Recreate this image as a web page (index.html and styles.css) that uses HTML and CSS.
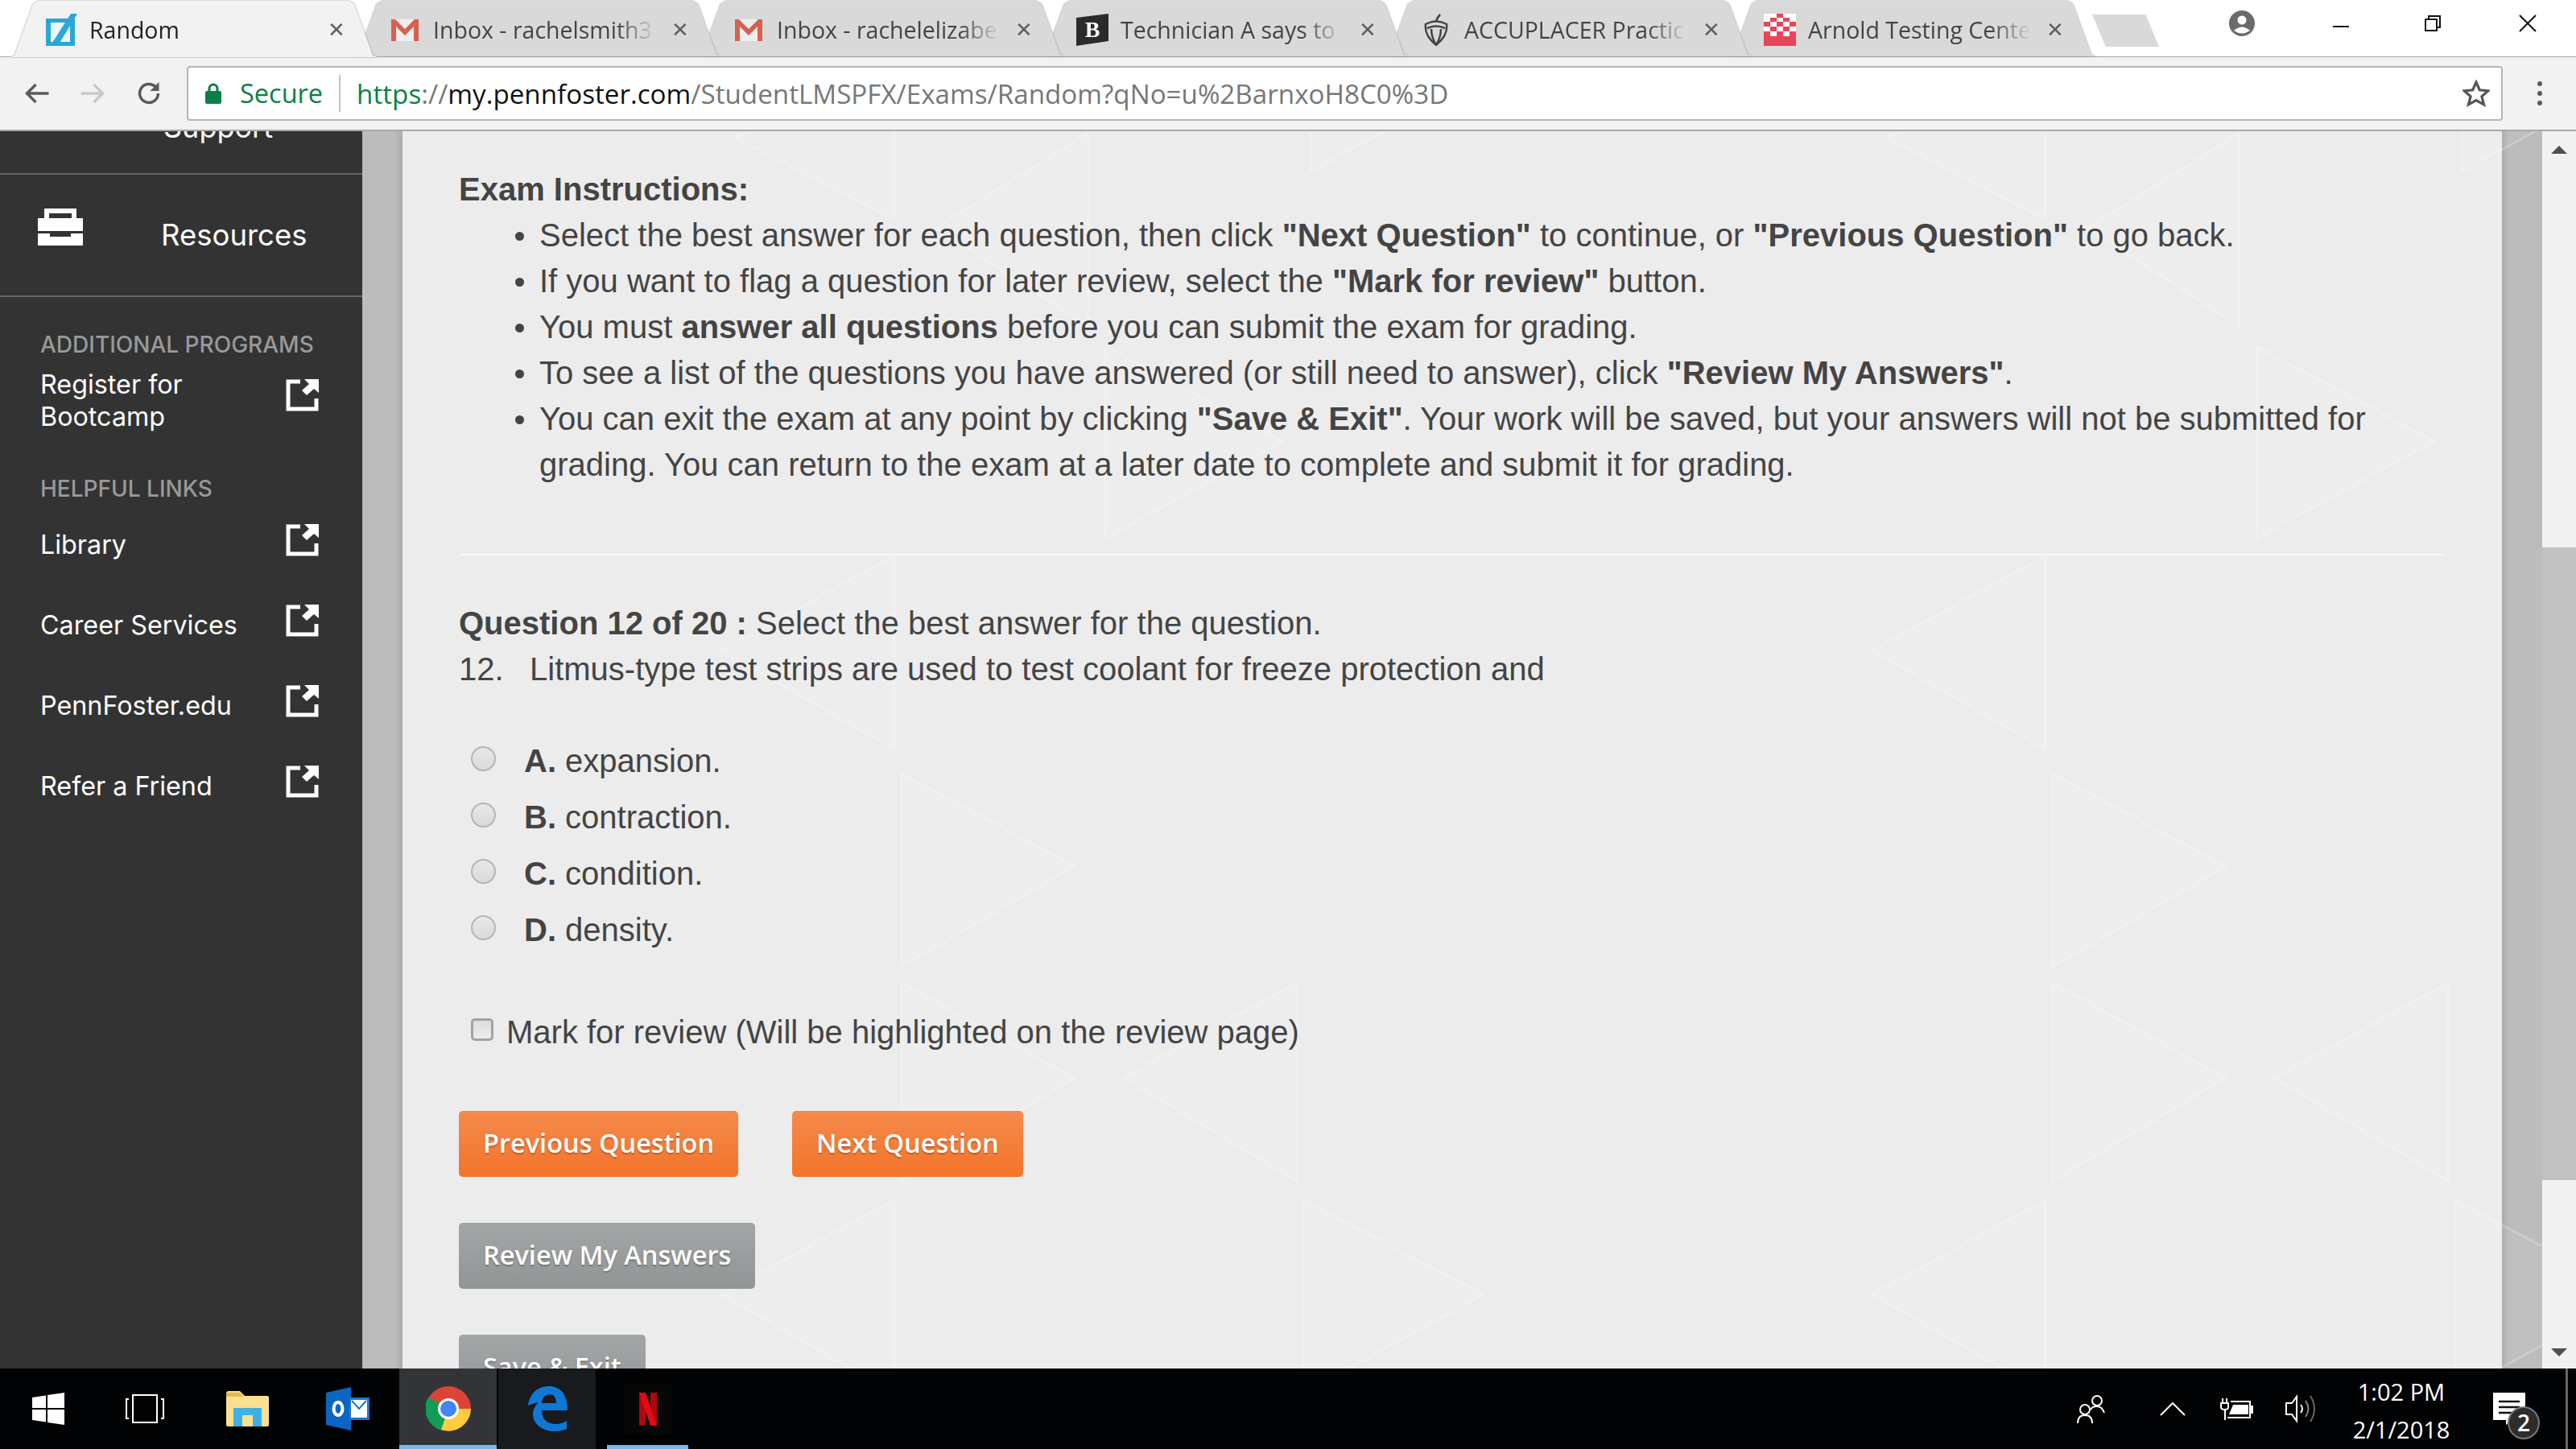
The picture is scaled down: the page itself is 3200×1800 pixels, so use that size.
FILE: index.html
```html
<!DOCTYPE html>
<html lang="en">

<head>
    <meta charset="UTF-8">
    <title>Random</title>
    <link rel="stylesheet" href="styles.css">
</head>

<body>
    <div class="tabstrip">
        <div class="tab active">
            <svg class="favicon" viewBox="0 0 40 40"><rect x="1" y="6" width="36" height="34" fill="#2aa7d8"/><rect x="7" y="11" width="24" height="24" fill="#eaf6fb"/><path d="M9 36L32 0h8L17 38z" fill="#2aa7d8"/></svg>
            <span class="tab-title">Random</span><span class="tab-x">&#10005;</span>
        </div>
        <div class="tab">
            <svg class="favicon" viewBox="0 0 40 40"><rect x="3" y="7" width="34" height="27" fill="#eee"/><path d="M3 7h5l12 12L32 7h5v27h-6V16L20 27 9 16v18H3z" fill="#d9604f"/></svg>
            <span class="tab-title">Inbox - rachelsmith3</span><span class="tab-x">&#10005;</span>
        </div>
        <div class="tab">
            <svg class="favicon" viewBox="0 0 40 40"><rect x="3" y="7" width="34" height="27" fill="#eee"/><path d="M3 7h5l12 12L32 7h5v27h-6V16L20 27 9 16v18H3z" fill="#d9604f"/></svg>
            <span class="tab-title">Inbox - rachelelizabe</span><span class="tab-x">&#10005;</span>
        </div>
        <div class="tab">
            <svg class="favicon" viewBox="0 0 40 40"><path d="M0 5l40-5v34L0 40z" fill="#2b2b2b"/><text x="20" y="29" text-anchor="middle" class="b-letter">B</text></svg>
            <span class="tab-title">Technician A says to c</span><span class="tab-x">&#10005;</span>
        </div>
        <div class="tab">
            <svg class="favicon" viewBox="0 0 40 40"><path d="M7 13q13-7 26 0q2 14-13 26Q5 27 7 13zM20 9q2-5 5-8M9 18q11-5 22 0M14 19q0 10 6 20q6-10 6-20" fill="none" stroke="#444" stroke-width="2.500"/></svg>
            <span class="tab-title">ACCUPLACER Practic</span><span class="tab-x">&#10005;</span>
        </div>
        <div class="tab">
            <svg class="favicon" viewBox="0 0 40 40"><rect width="40" height="40" fill="#e8455a"/><path d="M0 0h16v5H0zM24 0h16v5H24zM0 5h8v5H0zM16 5h8v5h-8zM32 5h8v5h-8zM8 10h8v6H8zM24 10h8v6h-8zM16 16h8v6h-8zM0 16h8v6H0zM32 16h8v6h-8zM8 22h8v6H8zM24 22h8v6h-8z" fill="#fff"/></svg>
            <span class="tab-title">Arnold Testing Cente</span><span class="tab-x">&#10005;</span>
        </div>
        <div class="new-tab"></div>
        <div class="window-controls">
            <svg class="profile" viewBox="0 0 32 32"><circle cx="16" cy="16" r="16" fill="#6b6b6b"/><circle cx="16" cy="12" r="5.500" fill="#fff"/><path d="M6 25q10-9 20 0q-10 7-20 0z" fill="#fff"/></svg>
            <svg class="win-icon" viewBox="0 0 22 22"><path d="M1 15h20" stroke="#111" stroke-width="2"/></svg>
            <svg class="win-icon" viewBox="0 0 22 22"><path d="M2 6h14v14H2zM6 6V2h14v14h-4" fill="none" stroke="#111" stroke-width="2"/></svg>
            <svg class="win-icon" viewBox="0 0 22 22"><path d="M1 1l20 20M21 1L1 21" stroke="#111" stroke-width="2"/></svg>
        </div>
    </div>

    <div class="toolbar">
        <svg class="nav-icon" viewBox="0 0 32 32"><path d="M31 16H4M15 5L4 16l11 11" fill="none" stroke="#5a5a5a" stroke-width="3.500"/></svg>
        <svg class="nav-icon" viewBox="0 0 32 32"><path d="M1 16h27M17 5l11 11-11 11" fill="none" stroke="#c8c8c8" stroke-width="3.500"/></svg>
        <svg class="nav-icon" viewBox="0 0 32 32"><path d="M27 16a11.500 11.500 0 1 1-3.500-8.300" fill="none" stroke="#5a5a5a" stroke-width="3.500"/><path d="M28 2v11H17z" fill="#5a5a5a"/></svg>
        <div class="omnibox">
            <svg class="lock" viewBox="0 0 20 28"><path d="M5 12V8a5 5 0 0 1 10 0v4" fill="none" stroke="#0b8043" stroke-width="3"/><rect y="11" width="20" height="16" rx="2" fill="#0b8043"/></svg>
            <span class="secure">Secure</span>
            <span class="url"><span class="scheme">https</span><span class="grey">://</span><span class="host">my.pennfoster.com</span><span class="grey">/StudentLMSPFX/Exams/Random?qNo=u%2BarnxoH8C0%3D</span></span>
            <svg class="star" viewBox="0 0 32 32"><path d="M16 3l4 9 10 1-7.500 6.500L25 29l-9-5-9 5 2.500-9.500L2 13l10-1z" fill="none" stroke="#555" stroke-width="3"/></svg>
        </div>
        <div class="menu-dots"><i></i><i></i><i></i></div>
    </div>

    <div class="main">
        <div class="sidebar">
            <div class="nav-support"><span>Support</span></div>
            <div class="nav-resources">
                <svg class="briefcase" viewBox="0 0 56 46"><path d="M8 0h40v12h8v16H0V12h8zM14 6v6h28V6z" fill="#fff" fill-rule="evenodd"/><path d="M0 31h15v4h26v-4h15v15H0z" fill="#fff"/></svg>
                <span>Resources</span>
            </div>
            <div class="links">
                <h4>ADDITIONAL PROGRAMS</h4>
                <a class="link link-first">Register for<br>Bootcamp<svg class="ext" viewBox="0 0 41 40"><use href="#ext-icon"/></svg></a>
                <h4>HELPFUL LINKS</h4>
                <a class="link">Library<svg class="ext" viewBox="0 0 41 40"><use href="#ext-icon"/></svg></a>
                <a class="link">Career Services<svg class="ext" viewBox="0 0 41 40"><use href="#ext-icon"/></svg></a>
                <a class="link">PennFoster.edu<svg class="ext" viewBox="0 0 41 40"><use href="#ext-icon"/></svg></a>
                <a class="link">Refer a Friend<svg class="ext" viewBox="0 0 41 40"><use href="#ext-icon"/></svg></a>
            </div>
        </div>
        <div class="gutter"></div>
        <div class="content">
            <h3 class="instr-head">Exam Instructions:</h3>
            <ul class="instructions">
                <li>Select the best answer for each question, then click <b>"Next Question"</b> to continue, or <b>"Previous Question"</b> to go back.</li>
                <li>If you want to flag a question for later review, select the <b>"Mark for review"</b> button.</li>
                <li>You must <b>answer all questions</b> before you can submit the exam for grading.</li>
                <li>To see a list of the questions you have answered (or still need to answer), click <b>"Review My Answers"</b>.</li>
                <li>You can exit the exam at any point by clicking <b>"Save &amp; Exit"</b>. Your work will be saved, but your answers will not be submitted for grading. You can return to the exam at a later date to complete and submit it for grading.</li>
            </ul>
            <hr class="divider">
            <p class="q-line"><b>Question 12 of 20 :</b> Select the best answer for the question.</p>
            <p class="q-line q-text"><span class="q-num">12.</span>Litmus-type test strips are used to test coolant for freeze protection and</p>
            <div class="options">
                <label class="option"><span class="radio"></span><span><b>A.</b> expansion.</span></label>
                <label class="option"><span class="radio"></span><span><b>B.</b> contraction.</span></label>
                <label class="option"><span class="radio"></span><span><b>C.</b> condition.</span></label>
                <label class="option"><span class="radio"></span><span><b>D.</b> density.</span></label>
            </div>
            <label class="mark"><span class="check"></span>Mark for review (Will be highlighted on the review page)</label>
            <div class="btn-row">
                <a class="btn orange">Previous Question</a>
                <a class="btn orange">Next Question</a>
            </div>
            <div class="btn-row"><a class="btn grey-btn">Review My Answers</a></div>
            <div class="btn-row"><a class="btn grey-btn">Save &amp; Exit</a></div>
        </div>
        <div class="gutter"></div>
        <div class="scrollbar">
            <i class="arrow-up"></i>
            <div class="thumb"></div>
            <i class="arrow-down"></i>
        </div>
        <!-- background triangles, one group repeats sideways -->
        <svg class="pattern" viewBox="0 0 2660 1540">
            <g id="tri-tile">
                <polygon points="611,527 396,645 611,768"/>
                <polygon points="620,798 835,913 620,1038"/>
                <polygon points="620,1058 835,1176 620,1304"/>
                <polygon points="1111,1058 895,1176 1111,1304"/>
                <polygon points="873,267 1094,385 873,506"/>
                <polygon points="852,2 663,120 852,243"/>
                <polygon points="611,1327 396,1445 611,1568"/>
                <polygon points="1119,1328 1343,1445 1119,1568"/>
                <polygon points="413,7 611,110 611,-60"/>
                <polygon points="1128,50 1275,-30 1128,-90"/>
            </g>
            <use href="#tri-tile" x="1430"/>
        </svg>
    </div>

    <div class="taskbar">
        <svg class="start" viewBox="0 0 40 40"><path d="M0 6l17-2.500V19H0zM19 3l21-3v19H19zM0 21h17v15.500L0 34zM19 21h21v19l-21-3z" fill="#fff"/></svg>
        <svg class="view" viewBox="0 0 48 36"><path d="M9 1h30v34H9zM4 6H1v24h3M44 6h3v24h-3" fill="none" stroke="#fff" stroke-width="2"/></svg>
        <svg class="folder" viewBox="0 0 53 44"><path d="M0 3q0-3 3-3h14l6 6h28q2 0 2 2v34q0 2-2 2H2q-2 0-2-2z" fill="#fbe08f"/><path d="M0 2h17l5 5H0z" fill="#e5b94e"/><path d="M9 44V21h35v23H33V30H20v14z" fill="#3fb0e4"/></svg>
        <svg class="outlook" viewBox="0 0 54 54"><path d="M0 7L31 0v54L0 47z" fill="#0a66c2"/><rect x="29" y="13" width="25" height="28" rx="1" fill="#1f76c8"/><path d="M31 16h20v22H31z" fill="#fff"/><path d="M32 17l9 10 9-10" fill="none" stroke="#1f76c8" stroke-width="2"/><ellipse cx="15" cy="27" rx="5.500" ry="8" fill="none" stroke="#fff" stroke-width="4"/></svg>
        <div class="task-slot chrome-slot">
            <svg class="slot-icon" viewBox="0 0 56 56"><circle cx="28" cy="28" r="28" fill="#db4437"/><path d="M28 28L3 14A28 28 0 0 0 20 55z" fill="#0f9d58"/><path d="M28 28h28a28 28 0 0 1-37 26z" fill="#ffcd40"/><circle cx="28" cy="28" r="13" fill="#fff"/><circle cx="28" cy="28" r="10" fill="#4285f4"/></svg>
        </div>
        <div class="task-slot edge-slot">
            <svg class="slot-icon" viewBox="0 0 50 56"><path d="M1 24C3 8 14 0 27 0c14 0 23 10 23 30H18c0 12 8 17 17 17 6 0 11-2 14-4v10c-4 2-10 3-16 3C18 56 7 46 7 35c0-6 3-11 7-15-4 1-9 2-13 4zM18 21h18c0-7-3-11-8-11-6 0-10 5-10 11z" fill="#0f78d4"/></svg>
        </div>
        <div class="task-slot netflix-slot">
            <svg class="netflix" viewBox="0 0 60 60"><path d="M19 10h8v40l-8 1zM33 10h8v41l-8-1z" fill="#b1060f"/><path d="M19 10h8l14 41h-8z" fill="#e50914"/></svg>
        </div>
        <div class="tray">
            <svg class="people" viewBox="0 0 37 36"><circle cx="25" cy="8" r="6" fill="none" stroke="#fff" stroke-width="2"/><path d="M17 19q2-4 8-4t9 8" fill="none" stroke="#fff" stroke-width="2"/><circle cx="10" cy="19" r="6" fill="none" stroke="#fff" stroke-width="2"/><path d="M1 36q0-10 9-10t9 10" fill="none" stroke="#fff" stroke-width="2"/></svg>
            <svg class="chevron" viewBox="0 0 32 17"><path d="M1 16L16 1l15 15" fill="none" stroke="#fff" stroke-width="2"/></svg>
            <svg class="battery" viewBox="0 0 41 27"><path d="M3 0v6M8 0v6M1 6h9v5q0 3-4.500 3T1 11zM6 14v13" fill="none" stroke="#fff" stroke-width="2"/><path d="M13 4h24v20H9" fill="none" stroke="#fff" stroke-width="2"/><path d="M16 8h19v12H11z" fill="#fff"/><rect x="38" y="9" width="3" height="10" fill="#fff"/></svg>
            <svg class="volume" viewBox="0 0 40 36"><path d="M1 11h7l6-8v30l-6-8H1z" fill="none" stroke="#fff" stroke-width="2"/><path d="M19 13q4 5 0 10" fill="none" stroke="#fff" stroke-width="2"/><path d="M25 8q7 10 0 20" fill="none" stroke="#888" stroke-width="2"/><path d="M31 2q10 16 0 32" fill="none" stroke="#666" stroke-width="2"/></svg>
            <div class="clock"><span>1:02 PM</span><span>2/1/2018</span></div>
            <div class="notify">
                <svg class="notify-icon" viewBox="0 0 40 40"><path d="M0 0h40v34H22l-6 6v-6H0z" fill="#fff"/><path d="M7 11h26M7 18h26M7 25h26" stroke="#111" stroke-width="2.500"/></svg>
                <span class="badge">2</span>
            </div>
            <div class="show-desktop"></div>
        </div>
    </div>

    <svg class="defs"><defs><g id="ext-icon"><path d="M18 3H3v34h35V24" fill="none" stroke="#fff" stroke-width="5"/><path d="M41 0v17l-6-5-9 8-6-6 9-8-6-6z" fill="#fff"/></g></defs></svg>
</body>

</html>
```

FILE: styles.css
```css
* {
    padding: 0;
    margin: 0;
    box-sizing: border-box;
    list-style: none;
}

html,
body {
    width: 3200px;
    height: 1800px;
    overflow: hidden;
}

body {
    display: flex;
    flex-direction: column;
    font-family: "Liberation Sans", Arial, sans-serif;
    background: #fff;
}

/* browser tabs */
.tabstrip {
    height: 71px;
    display: flex;
    align-items: flex-start;
    padding: 1px 49px 0 12px;
    background: linear-gradient(#fff 70px, #a6a6a6 70px);
    font-family: "Open Sans", sans-serif;
    flex-shrink: 0;
}

.tab {
    position: relative;
    width: 457px;
    height: 69px;
    margin-right: -30px;
    flex-shrink: 0;
    display: flex;
    align-items: center;
    padding: 2px 42px 0 44px;
    font-size: 28.5px;
    color: #444;
    filter: drop-shadow(0 0 1px #8f8f8f);
}

.tab::before {
    content: "";
    position: absolute;
    left: 0;
    top: 0;
    right: 0;
    bottom: 0;
    z-index: -1;
    background: #d9d9d9;
    clip-path: polygon(0 100%, 6px 97%, 29px 4px, 36px 0, calc(100% - 36px) 0, calc(100% - 29px) 4px, calc(100% - 6px) 97%, 100% 100%);
}

.tab:nth-child(1) { z-index: 7; }
.tab:nth-child(2) { z-index: 6; }
.tab:nth-child(3) { z-index: 5; }
.tab:nth-child(4) { z-index: 4; }
.tab:nth-child(5) { z-index: 3; }
.tab:nth-child(6) { z-index: 2; }

.tab.active {
    height: 70px;
    color: #222;
}

.tab.active::before {
    background: #f2f2f2;
}

.favicon {
    width: 40px;
    height: 40px;
    flex-shrink: 0;
}

.b-letter {
    fill: #fff;
    font-family: "Liberation Serif", serif;
    font-size: 28px;
    font-weight: bold;
}

.tab-title {
    flex: 1;
    margin-left: 15px;
    white-space: nowrap;
    overflow: hidden;
    -webkit-mask-image: linear-gradient(to right, #000 calc(100% - 50px), transparent);
    mask-image: linear-gradient(to right, #000 calc(100% - 50px), transparent);
}

.tab.active .tab-title {
    -webkit-mask-image: none;
    mask-image: none;
}

.tab-x {
    width: 20px;
    margin-left: 19px;
    font-family: "DejaVu Sans", sans-serif;
    font-size: 26px;
    line-height: 26px;
    text-align: center;
    color: #5f5f5f;
}

.new-tab {
    width: 83px;
    height: 40px;
    margin: 17px 0 0 25px;
    flex-shrink: 0;
    background: #d9d9d9;
    clip-path: polygon(0 0, 80% 0, 100% 100%, 20% 100%);
}

.window-controls {
    margin-left: auto;
    display: flex;
    align-items: center;
    padding-top: 12px;
}

.profile {
    width: 34px;
    height: 32px;
    margin-right: 95px;
}

.win-icon {
    width: 22px;
    height: 22px;
    margin-right: 92px;
}

.win-icon:last-child {
    margin: 0 0 0 4px;
}

/* address bar */
.toolbar {
    height: 92px;
    flex-shrink: 0;
    display: flex;
    align-items: center;
    gap: 37px;
    padding: 0 42px 0 29px;
    background: #f2f2f2;
    border-bottom: 2px solid #a8a8a8;
}

.nav-icon {
    width: 33px;
    height: 32px;
    flex-shrink: 0;
}

.omnibox {
    flex: 1;
    height: 68px;
    margin-left: -7px;
    display: flex;
    align-items: center;
    padding: 0 14px 0 21px;
    background: #fff;
    border: 2px solid #b5b5b5;
    border-radius: 4px;
    font-family: "Open Sans", sans-serif;
    font-size: 33.2px;
}

.lock {
    width: 20px;
    height: 28px;
}

.secure {
    color: #0b8043;
    margin-left: 23px;
    padding-right: 20px;
    border-right: 2px solid #c4c4c4;
    line-height: 46px;
    font-size: 32.5px;
}

.url {
    flex: 1;
    margin-left: 20px;
    white-space: nowrap;
}

.scheme {
    color: #0b8043;
}

.grey {
    color: #777;
}

.host {
    color: #111;
}

.star {
    width: 34px;
    height: 34px;
}

.menu-dots {
    display: flex;
    flex-direction: column;
    gap: 6px;
    margin-left: 6px;
}

.menu-dots i {
    width: 6px;
    height: 6px;
    border-radius: 50%;
    background: #5a5a5a;
}

/* page area */
.main {
    flex: 1;
    min-height: 0;
    display: flex;
    overflow: hidden;
    position: relative;
}

.sidebar {
    width: 450px;
    flex-shrink: 0;
    background: #333;
    color: #fff;
    font-family: Inter, "Noto Sans", sans-serif;
}

.nav-support {
    height: 54px;
    border-bottom: 2px solid #666;
    text-align: center;
    overflow: hidden;
    font-size: 36px;
    line-height: 44px;
    padding-left: 92px;
}

.nav-support span {
    display: block;
    margin-top: -27px;
}

.nav-resources {
    height: 152px;
    display: flex;
    align-items: center;
    padding-left: 47px;
    border-bottom: 2px solid #666;
    font-size: 36.5px;
}

.nav-resources span {
    margin-left: 97px;
}

.briefcase {
    width: 56px;
    height: 46px;
    margin-top: -20px;
}

.links {
    padding: 41px 0 0 50px;
}

.links h4 {
    font-size: 28px;
    font-weight: 500;
    color: #999;
    line-height: 36px;
    margin-bottom: 2px;
}

.link {
    display: flex;
    position: relative;
    height: 100px;
    align-items: center;
    font-size: 32.3px;
    line-height: 40px;
    color: #fff;
}

.link-first {
    display: block;
    height: 80px;
    margin: 12px 0 51px;
}

.ext {
    position: absolute;
    left: 305px;
    top: 24px;
    width: 41px;
    height: 40px;
}

.link-first .ext {
    top: 13px;
}

.gutter {
    width: 50px;
    flex-shrink: 0;
    background: #bcbcbc;
    box-shadow: inset -10px 0 8px -8px rgba(0, 0, 0, .15);
}

.gutter:nth-of-type(n+3) {
    box-shadow: inset 10px 0 8px -8px rgba(0, 0, 0, .15);
}

.content {
    width: 2608px;
    flex-shrink: 0;
    padding: 44px 70px 0;
    background: #ececec;
    color: #444;
    font-size: 40px;
    line-height: 57px;
    overflow: hidden;
}

.content > * {
    position: relative;
    z-index: 2;
}

.pattern {
    position: absolute;
    left: 500px;
    top: 0;
    width: 2660px;
    height: 1540px;
    z-index: 1;
    fill: rgba(255, 255, 255, .05);
    stroke: rgba(255, 255, 255, .22);
    stroke-width: 3;
    pointer-events: none;
}

.instr-head {
    font-size: 40px;
    font-weight: bold;
    line-height: 57px;
}

.instructions {
    padding-left: 100px;
}

.instructions li {
    position: relative;
}

.instructions li::before {
    content: "";
    position: absolute;
    left: -30px;
    top: 24px;
    width: 11px;
    height: 11px;
    border-radius: 50%;
    background: #444;
}

.divider {
    height: 2px;
    border: 0;
    background: #f8f8f8;
    margin: 82px 0 56px;
}

.q-num {
    display: inline-block;
    width: 88px;
}

.options {
    margin-top: 50px;
}

.option {
    display: flex;
    height: 70px;
    align-items: center;
    padding-left: 15px;
}

.radio {
    width: 31px;
    height: 31px;
    margin: -6px 35px 0 0;
    border-radius: 50%;
    border: 2px solid #b5b5b5;
    background: linear-gradient(#e8e8e8, #dadada);
}

.mark {
    display: flex;
    align-items: center;
    margin-top: 64px;
    padding-left: 15px;
}

.check {
    width: 28px;
    height: 28px;
    margin: -8px 16px 0 0;
    border: 3px solid #a2a2a2;
    border-radius: 5px;
    background: linear-gradient(#dcdcdc, #ececec);
}

.btn-row {
    display: flex;
    gap: 67px;
    margin-top: 57px;
}

.mark + .btn-row {
    margin-top: 69px;
}

.btn {
    display: block;
    height: 82px;
    padding: 0 30px;
    border-radius: 5px;
    color: #fff;
    font-family: "Open Sans", sans-serif;
    font-size: 32.5px;
    font-weight: 600;
    line-height: 80px;
    text-shadow: 0 2px 2px rgba(0, 0, 0, .25);
}

.orange {
    background: linear-gradient(#f48a4c, #f4742a);
}

.grey-btn {
    background: linear-gradient(#a3a6a6, #929595);
}

.scrollbar {
    width: 42px;
    flex-shrink: 0;
    position: relative;
    z-index: 2;
    background: #f1f1f1;
}

.thumb {
    position: absolute;
    left: 0;
    top: 517px;
    width: 42px;
    height: 786px;
    background: #c1c1c1;
}

.arrow-up,
.arrow-down {
    position: absolute;
    left: 11px;
    width: 0;
    height: 0;
    border-left: 10px solid transparent;
    border-right: 10px solid transparent;
}

.arrow-up {
    top: 18px;
    border-bottom: 10px solid #505050;
}

.arrow-down {
    bottom: 15px;
    border-top: 10px solid #505050;
}

/* windows taskbar */
.taskbar {
    height: 100px;
    flex-shrink: 0;
    display: flex;
    align-items: center;
    padding-right: 10px;
    background: #010204;
    color: #fff;
}

.start {
    width: 40px;
    height: 40px;
    margin-left: 40px;
}

.view {
    width: 48px;
    height: 36px;
    margin-left: 76px;
}

.folder {
    width: 53px;
    height: 44px;
    margin-left: 77px;
}

.outlook {
    width: 54px;
    height: 54px;
    margin-left: 71px;
}

.task-slot {
    height: 100px;
    display: flex;
    align-items: center;
    justify-content: center;
}

.chrome-slot {
    width: 121px;
    margin-left: 37px;
    background: #333438;
    border-bottom: 5px solid #76b9ed;
    padding-top: 5px;
}

.edge-slot {
    width: 121px;
    background: #181a1e;
    margin-left: 2px;
}

.netflix-slot {
    width: 101px;
    margin-left: 14px;
    border-bottom: 5px solid #76b9ed;
    padding-top: 5px;
}

.slot-icon {
    width: 56px;
    height: 56px;
}

.netflix {
    width: 60px;
    height: 60px;
    background: #070707;
}

.tray {
    margin-left: auto;
    display: flex;
    align-items: center;
    height: 100px;
}

.people {
    width: 37px;
    height: 36px;
    margin-right: 66px;
}

.chevron {
    width: 32px;
    height: 17px;
    margin-right: 43px;
}

.battery {
    width: 41px;
    height: 27px;
    margin-right: 40px;
}

.volume {
    width: 40px;
    height: 36px;
    margin-right: 44px;
}

.clock {
    display: flex;
    flex-direction: column;
    align-items: center;
    gap: 17px;
    width: 120px;
    padding-top: 4px;
    font-family: "Open Sans", sans-serif;
    font-size: 29px;
    line-height: 30px;
}

.notify {
    position: relative;
    width: 58px;
    height: 60px;
    margin-left: 54px;
}

.notify-icon {
    display: block;
    width: 40px;
    height: 40px;
    margin-top: 10px;
}

.badge {
    position: absolute;
    left: 18px;
    top: 27px;
    width: 40px;
    height: 41px;
    border-radius: 50%;
    background: #2d2d2d;
    border: 2px solid #777;
    text-align: center;
    font-family: "Open Sans", sans-serif;
    font-size: 28px;
    font-weight: 600;
    line-height: 36px;
}

.show-desktop {
    width: 3px;
    height: 100px;
    margin-left: 32px;
    background: #666;
}

.defs {
    position: absolute;
    width: 0;
    height: 0;
}
```
